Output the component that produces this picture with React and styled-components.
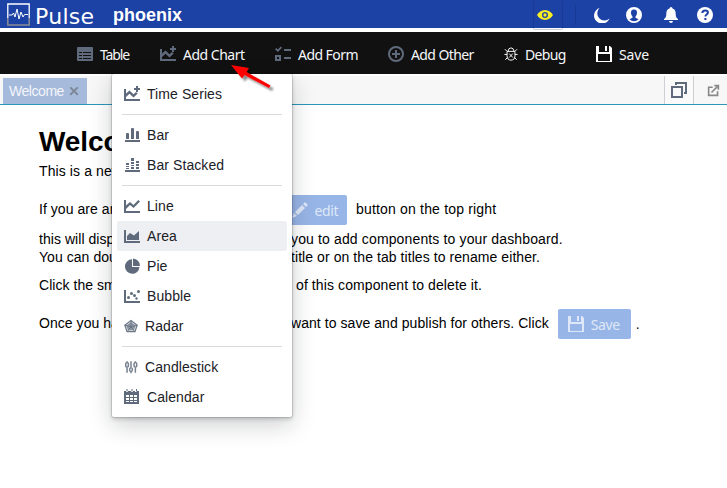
import React from 'react';
import styled, { createGlobalStyle } from 'styled-components';

const Global = createGlobalStyle`
  * { box-sizing: border-box; }
  body { margin: 0; overflow: hidden; background: #fff; }
`;

const Page = styled.div`
  position: relative;
  width: 727px;
  height: 488px;
  overflow: hidden;
  background: #fff;
  color: #000;
  font: 14px/18px "Liberation Sans", Arial, sans-serif;
`;

const Header = styled.header`
  display: flex;
  height: 28px;
  padding-left: 7px;
  align-items: flex-start;
  background: #1c42a6;
  color: #fff;
`;

const Logo = styled.svg`
  width: 23px;
  height: 23px;
  margin-top: 3px;
`;

const Brand = styled.span`
  width: 78px;
  padding-left: 5px;
  font: 22px/33px "DejaVu Sans", Verdana, sans-serif;
  letter-spacing: 0.3px;
`;

const Workspace = styled.strong`
  padding-left: 5px;
  font-size: 18px;
  line-height: 30px;
`;

const HeaderActions = styled.div`
  display: flex;
  align-items: flex-start;
  margin-left: auto;
  height: 30px;
`;

const ViewButton = styled.span`
  width: 30px;
  height: 30px;
  padding: 7px 0 0 3px;
  border: 1px solid rgba(20, 30, 80, 0.22);
  border-top: 0;
  border-radius: 2px;
  color: #f9ed24;
  margin-right: 12px;
`;

const Separator = styled.span`
  width: 1px;
  height: 20px;
  margin-top: 5px;
  background: #173991;
`;

const HeaderIcon = styled.span`
  margin-top: 7px;
  margin-left: ${(p) => p.$gap}px;
  margin-right: ${(p) => p.$end || 0}px;
  height: 16px;
`;

const Toolbar = styled.nav`
  display: flex;
  height: 42px;
  margin-top: 4px;
  padding-left: 77px;
  align-items: center;
  background: #111;
  color: #f6f7f9;
`;

const Tool = styled.span`
  display: flex;
  flex: none;
  align-items: center;
  gap: 7px;
  width: ${(p) => p.$width}px;
  padding-top: 2px;
  font: 14px/20px "Noto Sans", Tahoma, sans-serif;
  letter-spacing: ${(p) => p.$track || -0.5}px;
  white-space: nowrap;
`;

const Glyph = styled.svg`
  display: block;
  flex: none;
  width: ${(p) => p.$size || 16}px;
  height: ${(p) => p.$size || 16}px;
  fill: currentColor;
  color: ${(p) => p.$tone || 'inherit'};
`;

const TabBar = styled.div`
  display: flex;
  height: 29px;
  margin-top: 2px;
  padding-left: 3px;
  border-bottom: 1px solid #2b96b8;
  background: #f7f7f7;
`;

const Tab = styled.span`
  display: flex;
  align-items: center;
  width: 84px;
  height: 26px;
  margin-top: 2px;
  padding-left: 6px;
  gap: 3px;
  background: #a6badc;
  color: #f3f5f9;
  letter-spacing: -0.45px;
`;

const TabTools = styled.div`
  display: flex;
  align-items: center;
  margin-left: auto;
  gap: 13px;
  padding-right: 7px;
`;

const WindowButton = styled.span`
  width: 30px;
  height: 28px;
  padding: 6px 0 0 6px;
  border: solid #cdcfd3;
  border-width: 0 1px;
  background: #fafafb;
`;

const Content = styled.main`
  padding: 19px 0 0 39px;
`;

const Title = styled.h1`
  margin: 0;
  font-size: 28px;
  line-height: 36px;
  letter-spacing: -0.1px;
`;

const Line = styled.div`
  display: flex;
  align-items: center;
  height: ${(p) => p.$height || 18}px;
  margin-top: ${(p) => p.$space || 0}px;
  white-space: pre;
  letter-spacing: ${(p) => p.$track || 0}px;
`;

const Lead = styled.span`
  flex: none;
  width: ${(p) => p.$width}px;
  margin-bottom: ${(p) => p.$lift || 0}px;
  overflow: hidden;
  letter-spacing: 0.05px;
`;

const Sentence = styled.span`
  margin-bottom: 2px;
`;

const Sample = styled.span`
  display: flex;
  align-items: center;
  gap: 7px;
  flex: none;
  width: ${(p) => p.$width}px;
  height: 30px;
  margin-left: ${(p) => p.$before || 0}px;
  margin-right: ${(p) => p.$after}px;
  padding-left: ${(p) => p.$inset || 10}px;
  border-radius: 2px;
  background: #98b5e7;
  color: #dee8f8;
  font: 14px/18px "Noto Sans", Tahoma, sans-serif;
  letter-spacing: -0.4px;
`;

const Label = styled.span`
  padding-top: 2px;
`;

const Menu = styled.div`
  position: absolute;
  left: 112px;
  top: 74px;
  width: 180px;
  height: 343px;
  padding: 5px;
  border-radius: 2px;
  background: #fff;
  box-shadow: 0 0 0 1px rgba(17, 20, 24, 0.12), 0 2px 4px rgba(17, 20, 24, 0.2), 0 8px 24px rgba(17, 20, 24, 0.2);
`;

const MenuItem = styled.div`
  display: flex;
  align-items: center;
  gap: 7px;
  height: 30px;
  padding: 0 7px;
  border-radius: 2px;
  background: ${(p) => (p.$active ? '#edeff2' : 'transparent')};
  color: #1c2127;
  letter-spacing: 0.08px;
`;

const Divider = styled.div`
  height: 1px;
  margin: 5px;
  background: #d9dadb;
`;

const Pointer = styled.svg`
  position: absolute;
  left: 226px;
  top: 60px;
  width: 52px;
  height: 34px;
`;

const slate = '#5f6b7c';

const shapes = {
  table: <path fillRule="evenodd" d="M1 1h14q1 0 1 1v12q0 1-1 1H1q-1 0-1-1V2q0-1 1-1zM2 6v1h3V6zm4 0v1h8V6zM2 9v1h3V9zm4 0v1h8V9zM2 12v1h3V12zm4 0v1h8V12z" />,
  series: <path d="M0 3h2v10h14v2H0zm2 8V7.500L5.500 4.500l4 3.800L12 6l1.700 1.600-4.200 4-4-3.800zM12 0h2v2h2v2h-2v2h-2V4h-2V2h2z" />,
  line: <path d="M0 2h2v11h14v2H0zm2 9V7.500l4-3.500 3.500 3L14.300 2 16 3.600 9.600 10 6 7z" />,
  area: <path d="M0 2h2v11h14v2H0zM3 12V8l3-3 4 2.500L15 3v9z" />,
  bar: <path d="M1 13h15v2H1zM2 7q0-1 1-1h1q1 0 1 1v5H2zm5-5q0-1 1-1h1q1 0 1 1v10H7zm5 3q0-1 1-1h1q1 0 1 1v7h-3z" />,
  stacked: <path d="M1 13h15v2H1zM2 6h3v2H2zm0 3h3v1H2zm0 2h3v1H2zM7 1h3v3H7zm0 4h3v2H7zm0 3h3v1H7zm0 2h3v2H7zM12 4h3v2h-3zm0 3h3v2h-3zm0 3h3v2h-3z" />,
  pie: <path d="M8 1.200V9h7.500A7.300 7.300 0 1 1 8 1.200zM9 .5A7.500 7.500 0 0 1 16 8H9z" />,
  bubble: <><path d="M0 2h2v11h14v2H0z" /><circle cx="4.500" cy="9.500" r="1.500" /><circle cx="7.500" cy="5.500" r="1.500" /><circle cx="10.500" cy="7.500" r="1.500" /><circle cx="14.500" cy="3.500" r="1.500" /><circle cx="12.500" cy="10.500" r="1.200" /></>,
  radar: <><path d="M8 1.800 15 7l-2.500 7.500h-9L1 7z" fill="none" stroke="currentColor" strokeWidth="1.500" opacity=".9" /><path d="m8 3.500 5.500 4-2 5.500h-7l-2-5.500z" opacity=".7" /><path d="M8 2v7M1 7l7 2 7-2M3.500 14.500 8 9l4.500 5.500" fill="none" stroke="currentColor" strokeWidth=".9" /></>,
  candle: <g fill="none" stroke="currentColor" strokeWidth="1.700" opacity=".85"><path d="M3.500 1.500v2m0 5v6M8 1.500v7m0 5v1.500M13 1.500v2m0 5v6" /><rect x="2" y="3" width="3" height="5" rx="1.200" /><rect x="6.500" y="9" width="3" height="4" rx="1.200" /><rect x="11.500" y="3" width="3" height="5" rx="1.200" /></g>,
  calendar: <path fillRule="evenodd" d="M0 2h2v1h2V2h3v1h2V2h2v1h2V2h2v13H0zM2 6v2h3V6zm4 0v2h3V6zm4 0v2h3V6zM2 9v2h3V9zm4 0v2h3V9zm4 0v2h3V9zM2 12v1h3V12zm4 0v1h3V12zm4 0v1h3V12zM2.500 0h1v2.500h-1zm5 0h1v2.500h-1zm4.500 0h1v2.500h-1z" />,
  form: <path fillRule="evenodd" d="M0 3.200 1.300 2l1.600 1.500L5.800.4 7 1.700 2.900 6zM9 3h7v2H9zm0 8h7v2H9zM0 9h6v6H0zm2 2v2h2v-2z" />,
  plus: <path fillRule="evenodd" d="M8 0a8 8 0 1 1 0 16A8 8 0 0 1 8 0zm0 2a6 6 0 1 0 0 12A6 6 0 0 0 8 2zM7 4h2v3h3v2H9v3H7V9H4V7h3z" />,
  bug: <g fill="none" stroke="currentColor" strokeWidth="1.100"><path d="M4.500 5Q5 1 8 1t3.500 4M3.500 5h9v5q0 5-4.500 5t-4.500-5zM3.500 8.500H.5m12 0h3M3.500 5 1 2.500m11.500 2.500L15 2.500M4 12l-2.500 2.500M12 12l2.500 2.500M6 7.500l4 4.500m0-4.500L6 12" /></g>,
  save: <path fillRule="evenodd" d="M0 0h3v6h10V0h1l2 2v14H0zm9 0h2v5H9zM2 8v7h12V8z" />,
  eye: <path fillRule="evenodd" d="M8 3c3.600 0 6.400 2.300 8 5-1.600 2.700-4.400 5-8 5S1.600 10.700 0 8c1.600-2.700 4.400-5 8-5zm0 2a3 3 0 1 0 0 6 3 3 0 0 0 0-6zM8 6.300a1.700 1.700 0 1 1 0 3.400 1.700 1.700 0 0 1 0-3.400z" />,
  moon: <path d="M5.500 1a7 7 0 0 0 10 10.500A8 8 0 1 1 5.500 1z" />,
  user: <path fillRule="evenodd" d="M8 0a8 8 0 1 1 0 16A8 8 0 0 1 8 0zm0 2.500c-2.300 0-3.300 1.700-3 3.800.2 1.500.8 2.500 1.500 3.200v1.300L3.500 12.300Q5.300 14.300 8 14.300t4.500-2l-3-1.500V9.500c.7-.7 1.300-1.700 1.500-3.200.3-2.100-.7-3.800-3-3.800z" />,
  bell: <path d="M8 0q1.500 0 1.500 1.600C12 2.400 12.700 4.500 12.700 7c0 3 .8 4.200 2.300 5v1H1v-1c1.500-.8 2.300-2 2.300-5 0-2.500.7-4.600 3.200-5.400Q6.500 0 8 0zM6 14h4q-.3 2-2 2t-2-2z" />,
  help: <><circle cx="8" cy="8" r="8" /><path d="M5.300 6q.1-2.600 2.900-2.600 2.700 0 2.700 2.200c0 1.900-2.500 1.800-2.500 3.800M8.400 11v2" fill="none" stroke="#1c42a6" strokeWidth="2" /></>,
  close: <path d="M3 4.500 4.500 3 8 6.500 11.500 3 13 4.500 9.500 8l3.500 3.500-1.500 1.500L8 9.500 4.500 13 3 11.500 6.500 8z" />,
  windows: <path fillRule="evenodd" d="M4 0h12v12h-3v-2h1V2H6v1H4zM0 4h12v12H0zm2 2v8h8V6z" />,
  share: <g fill="none" stroke="currentColor" strokeWidth="2"><path d="M7 4H2v10h11V9M5.500 10.500 14 2" /><path d="M9 2h5v5" /></g>,
  edit: <path d="m0 16 2-5 3 3zm3-6 7-7 3 3-7 7zm8-8 1.500-1.500q.5-.5 1 0l2 2q.5.500 0 1L14 5z" />,
};

function Icon({ name, size, tone }) {
  return <Glyph viewBox="0 0 16 16" $size={size} $tone={tone} aria-hidden="true">{shapes[name]}</Glyph>;
}

const tools = [
  { icon: 'table', label: 'Table', width: 83, track: -1.1 },
  { icon: 'series', label: 'Add Chart', width: 115 },
  { icon: 'form', label: 'Add Form', width: 113, track: -0.55 },
  { icon: 'plus', label: 'Add Other', width: 116, track: -0.6 },
  { icon: 'bug', label: 'Debug', width: 92, light: true, size: 14, track: -0.65 },
  { icon: 'save', label: 'Save', width: 60, light: true, track: -0.1 },
];

const groups = [
  [['series', 'Time Series']],
  [['bar', 'Bar'], ['stacked', 'Bar Stacked']],
  [['line', 'Line'], ['area', 'Area'], ['pie', 'Pie'], ['bubble', 'Bubble'], ['radar', 'Radar', 14]],
  [['candle', 'Candlestick', 14], ['calendar', 'Calendar']],
];

export default function App() {
  return (
    <Page>
      <Global />
      <Header>
        <Logo viewBox="0 0 23 23" fill="none" stroke="#fff">
          <path d="M.8 15V1h21.400v14" strokeWidth="1.300" />
          <path d="M.8 15v7h21.400v-7" stroke="#8c8d94" strokeWidth="1.500" />
          <path d="M2 12h3l1.500-2L8 14l2-8 2 10 2-7 2 5 1.500-2.500H21" strokeWidth="1" />
        </Logo>
        <Brand>Pulse</Brand>
        <Workspace>phoenix</Workspace>
        <HeaderActions>
          <ViewButton><Icon name="eye" /></ViewButton>
          <Separator />
          <HeaderIcon $gap={18}><Icon name="moon" /></HeaderIcon>
          <HeaderIcon $gap={16}><Icon name="user" /></HeaderIcon>
          <HeaderIcon $gap={21}><Icon name="bell" /></HeaderIcon>
          <HeaderIcon $gap={18} $end={14}><Icon name="help" /></HeaderIcon>
        </HeaderActions>
      </Header>
      <Toolbar>
        {tools.map((t) => (
          <Tool key={t.label} $width={t.width} $track={t.track}>
            <Icon name={t.icon} size={t.size} tone={t.light ? '#fff' : slate} />
            <Label>{t.label}</Label>
          </Tool>
        ))}
      </Toolbar>
      <TabBar>
        <Tab>Welcome<Icon name="close" size={14} tone="#7d8793" /></Tab>
        <TabTools>
          <WindowButton><Icon name="windows" tone={slate} /></WindowButton>
          <Icon name="share" size={13} tone="#888" />
        </TabTools>
      </TabBar>
      <Content>
        <Title>Welcome</Title>
        <Line $space={2} $track={0.1}>This is a new dashboard.</Line>
        <Line $space={15} $height={30} $track={0.18}>
          <Lead $width={243} $lift={2}>If you are an admin, click the</Lead>
          <Sample $width={65} $after={9} $inset={9.5}><Icon name="edit" /><Label>edit</Label></Sample>
          <Sentence>button on the top right</Sentence>
        </Line>
        <Line $space={5} $track={0.14}><Lead $width={252}>this will display a toolbar allowing</Lead>you to add components to your dashboard.</Line>
        <Line $track={0.07}><Lead $width={252}>You can double-click on the page</Lead>title or on the tab titles to rename either.</Line>
        <Line $space={10} $track={0.1}><Lead $width={253}>Click the small x on the corner</Lead> of this component to delete it.</Line>
        <Line $space={15} $height={30} $track={0.06}>
          <Lead $width={252} $lift={2}>Once you have made changes you</Lead>
          <Sentence>want to save and publish for others. Click</Sentence>
          <Sample $width={73} $before={9} $after={5}><Icon name="save" /><Label>Save</Label></Sample>.
        </Line>
      </Content>
      <Menu>
        {groups.map((items, i) => (
          <React.Fragment key={i}>
            {i > 0 && <Divider />}
            {items.map(([icon, label, size]) => (
              <MenuItem key={label} $active={label === 'Area'}>
                <Icon name={icon} size={size} tone={slate} />{label}
              </MenuItem>
            ))}
          </React.Fragment>
        ))}
      </Menu>
      <Pointer viewBox="0 0 52 34">
        <defs>
          <filter id="shade" x="-20%" y="-20%" width="150%" height="150%">
            <feDropShadow dx="3" dy="3" stdDeviation="1" floodOpacity=".45" />
          </filter>
        </defs>
        <path filter="url(#shade)" fill="#f00" d="M5 5 23 8 20.500 12 44.500 25.500 43 28 18.500 15 16 18.500z" />
      </Pointer>
    </Page>
  );
}
